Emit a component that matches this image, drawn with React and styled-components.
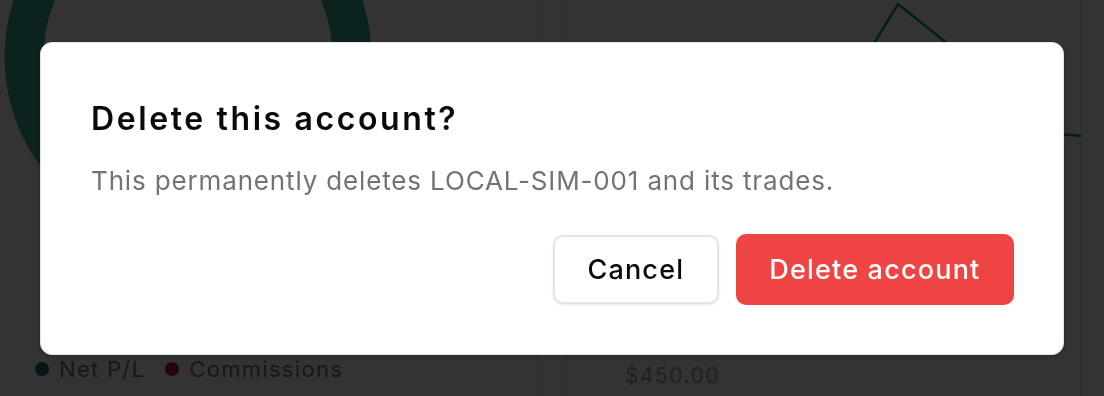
import React from "react";
import styled, { createGlobalStyle } from "styled-components";

const GlobalStyle = createGlobalStyle`
  html, body {
    margin: 0;
    padding: 0;
    background: #ffffff;
    font-family: Inter, "Noto Sans", sans-serif;
    overflow: hidden;
  }
`;

const Page = styled.div`
  width: 1104px;
  height: 396px;
  display: grid;
  grid-template-columns: 537px 515px;
  column-gap: 30px;
  overflow: hidden;
`;

const Card = styled.div`
  border-right: 1px solid #e5e5e5;
  border-left: ${(p) => (p.$left ? "1px solid #e5e5e5" : "none")};
  display: flex;
  flex-direction: column;
  justify-content: space-between;
  overflow: hidden;
`;

const Legend = styled.div`
  display: flex;
  align-items: center;
  gap: 20px;
  padding: 0 0 14px 35px;
  font-size: 22px;
  letter-spacing: 1.3px;
  color: #737373;
`;

const LegendItem = styled.span`
  display: flex;
  align-items: center;
  gap: 10px;

  &::before {
    content: "";
    width: 14px;
    height: 14px;
    border-radius: 50%;
    background: ${(p) => p.$color};
  }
`;

const Amount = styled.div`
  padding: 0 0 8px 57px;
  font-size: 21px;
  letter-spacing: 1.5px;
  color: #a3a3a3;
`;

const Overlay = styled.div`
  position: fixed;
  inset: 0;
  background: rgba(0, 0, 0, 0.8);
  display: flex;
  align-items: center;
  justify-content: center;
`;

const Dialog = styled.div`
  width: 1024px;
  box-sizing: border-box;
  background: #ffffff;
  border: 1px solid #e5e5e5;
  border-radius: 12px;
  box-shadow: 0 2px 6px rgba(0, 0, 0, 0.15);
  padding: 53px 49px 49px 50px;
  display: flex;
  flex-direction: column;
`;

const Title = styled.h2`
  margin: 0;
  font-size: 32px;
  line-height: 46px;
  font-weight: 600;
  letter-spacing: 2.6px;
  color: #0a0a0a;
`;

const Description = styled.p`
  margin: 21px 0 0;
  font-size: 26px;
  line-height: 36px;
  letter-spacing: 0.85px;
  color: #737373;
`;

const Actions = styled.div`
  margin-top: 35px;
  display: flex;
  justify-content: flex-end;
  align-items: center;
  gap: 17px;
`;

const Button = styled.button`
  height: ${(p) => (p.$danger ? "71px" : "69px")};
  padding: 0 ${(p) => (p.$danger ? "33.5px" : "32.5px")};
  border-radius: 10px;
  font-family: Inter, "Noto Sans", sans-serif;
  font-size: 27px;
  font-weight: 500;
  letter-spacing: 1.2px;
  cursor: pointer;
  border: ${(p) => (p.$danger ? "none" : "2px solid #e5e5e5")};
  background: ${(p) => (p.$danger ? "#ef4444" : "#ffffff")};
  color: ${(p) => (p.$danger ? "#ffffff" : "#0a0a0a")};
  box-shadow: ${(p) => (p.$danger ? "none" : "0 1px 3px rgba(0, 0, 0, 0.1)")};
`;

function Donut() {
  return (
    <svg width="537" height="340" viewBox="0 0 537 340">
      <circle cx="188" cy="57" r="164" fill="none" stroke="#38a89d" strokeWidth="39" />
    </svg>
  );
}

function LineChart() {
  return (
    <svg width="515" height="340" viewBox="0 0 515 340">
      <polyline
        points="250,120 305,45 330,4 400,60 460,132 515,136"
        fill="none"
        stroke="#0d9488"
        strokeWidth="2.5"
      />
    </svg>
  );
}

export default function App() {
  return (
    <>
      <GlobalStyle />
      <Page>
        <Card>
          <Donut />
          <Legend>
            <LegendItem $color="#0f766e">Net P/L</LegendItem>
            <LegendItem $color="#b91c1c">Commissions</LegendItem>
          </Legend>
        </Card>
        <Card $left>
          <LineChart />
          <Amount>$450.00</Amount>
        </Card>
      </Page>
      <Overlay>
        <Dialog role="alertdialog">
          <Title>Delete this account?</Title>
          <Description>
            This permanently deletes LOCAL-SIM-001 and its trades.
          </Description>
          <Actions>
            <Button>Cancel</Button>
            <Button $danger>Delete account</Button>
          </Actions>
        </Dialog>
      </Overlay>
    </>
  );
}
